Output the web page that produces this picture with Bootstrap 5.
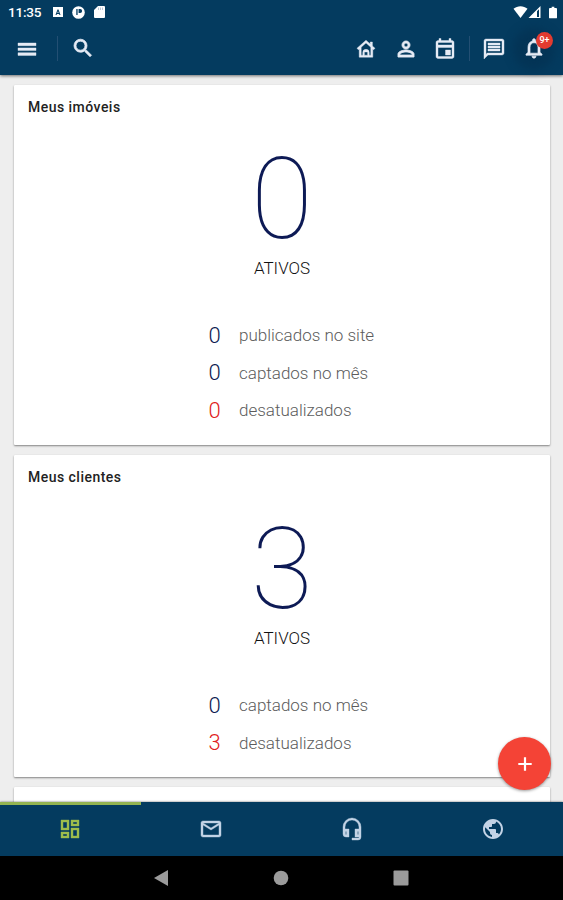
<!DOCTYPE html>
<html lang="pt-BR">
<head>
<meta charset="utf-8">
<meta name="viewport" content="width=device-width, initial-scale=1">
<title>Painel</title>
<link href="https://cdn.jsdelivr.net/npm/bootstrap@5.3.0/dist/css/bootstrap.min.css" rel="stylesheet">
<style>
body{font-family:Roboto,"Liberation Sans",sans-serif;background:#eee;color:#000}
svg{display:block;fill:currentColor;flex:none}
.app{height:900px;width:563px}
.top{background:#043b5f;height:75px;color:#e6ebf5;box-shadow:0 1px 3px rgba(0,0,0,.55);z-index:2}
.status{height:24px;padding:0 6px 0 8px;font-size:13.6px;font-weight:500;color:#fff;gap:9px}
.status .clock{width:36px;letter-spacing:-.25px;line-height:24px}
.tools{height:49px;padding:0 17px 0 15px}
.divider{width:1px;height:25px;background:#234f73}
.ic{width:24px;height:24px;stroke:currentColor;stroke-width:.4}
.gap-menu{margin:0 13px 0 18px}
.gap-chat{margin:0 12px}
.ic-person{margin-left:16px}
.ic-date{margin-left:15px}
.bell{margin-left:16px;box-shadow:0 0 9px 9px rgba(3,46,78,.5);background:rgba(3,46,78,.5);border-radius:50%}
.count{width:17px;height:17px;font-size:9px;line-height:17px;background:#e23b30;left:14px;top:-5px;color:#fff;font-weight:500}
.main{padding:10px 13px 0 14px;gap:10px;min-height:0}
.panel{background:#fff;border:0;border-radius:1px;box-shadow:0 1px 2px rgba(0,0,0,.45);flex:none;padding-top:14px}
.tall{height:360px}.mid{height:322px}
.panel h2{font-size:14px;line-height:16px;font-weight:500;letter-spacing:.47px;margin:0 14px 29px;color:#222}
.big{font-size:113px;line-height:112px;font-weight:100;color:#0d1a55}
.lbl{font-size:17px;line-height:18px;font-weight:300;color:#111;margin-top:3px}
.stats{margin:40px 0 0 191px}
.stats>div{height:37.5px;gap:15px}
.num{width:19px;text-align:center;font-size:22px;font-weight:300;color:#0b1a50;line-height:1}
.num.red{color:#e02020}
.desc{font-size:17px;font-weight:300;color:#5c5c5c;line-height:1}
.fab{width:53px;height:53px;background:#f44336;color:#fff;right:12px;bottom:110px;z-index:4;border:0;box-shadow:0 1px 3px rgba(0,0,0,.4)}
.tabs{height:54px;background:#043b5f;color:#c3d3e6;z-index:2;box-shadow:0 0 2px rgba(0,0,0,.6)}
.tabs a{color:inherit;padding-bottom:1px}
.tabs a.on{color:#9fbe4c;border-top:3px solid #93b351;padding-bottom:4px}
.sys{height:44px;background:#000;color:#9b9b9b;gap:98px;padding-right:1px}
</style>
<script src="https://cdn.jsdelivr.net/npm/bootstrap@5.3.0/dist/js/bootstrap.bundle.min.js"></script>
</head>
<body>
<div class="app d-flex flex-column position-relative overflow-hidden">
<header class="top flex-shrink-0">
 <div class="status d-flex align-items-center">
  <span class="clock">11:35</span>
  <svg width="10" height="10" viewBox="0 0 10 10"><path fill-rule="evenodd" d="M0 0h10v10H0zM2.500 8h1l.4-1h2.200l.4 1h1L5.500 2.500h-1zM5 4l.6 1.900H4.400z"/></svg>
  <svg width="13" height="13" viewBox="0 0 13 13"><circle cx="6.500" cy="6.500" r="6.300"/><path fill="#043b5f" d="M4.300 3h1.300v6H4.300zM6.600 3h1.500a2 2 0 0 1 0 4H6.600z"/></svg>
  <svg width="11" height="12" viewBox="0 0 11 12"><path d="M4 0h6a1 1 0 0 1 1 1v10a1 1 0 0 1-1 1H1a1 1 0 0 1-1-1V4z"/><path fill="#bcc8d8" d="M4 1.500h1V4H4zM6 1.500h1V4H6zM8 1.500h1V4H8z"/></svg>
  <div class="d-flex align-items-center ms-auto">
   <svg width="15" height="12" viewBox="0 0 14 12"><path d="M7 12 0 2.700C4-.7 10-.7 14 2.700z"/></svg>
   <svg class="signal" width="13" height="12" viewBox="0 0 12 12"><path fill-rule="evenodd" d="M12 0v12H0zM8.500 5.200V11h2V3.300z"/></svg>
   <svg class="ms-2" width="8" height="13" viewBox="0 0 9 13"><path d="M3 0h3v1.500h2a1 1 0 0 1 1 1V12a1 1 0 0 1-1 1H1a1 1 0 0 1-1-1V2.500a1 1 0 0 1 1-1h2z"/></svg>
  </div>
 </div>
 <nav class="tools d-flex align-items-center">
  <svg class="ic" viewBox="0 0 24 24"><path d="M3 6h18v2.700H3zM3 10.900h18v2.700H3zM3 15.700h18v2.700H3z"/></svg>
  <span class="divider gap-menu"></span>
  <svg class="ic" viewBox="0 0 24 24"><path stroke-width=".8" transform="translate(0 -.8)" d="M15.500 14h-.79l-.28-.27A6.470 6.470 0 0 0 16 9.500 6.500 6.500 0 1 0 9.500 16c1.610 0 3.090-.59 4.230-1.570l.27.28v.79l5 4.990L20.490 19l-4.990-5zm-6 0C7.010 14 5 11.990 5 9.500S7.010 5 9.500 5 14 7.010 14 9.500 11.990 14 9.500 14z"/></svg>
  <div class="d-flex align-items-center ms-auto">
   <svg class="ic" viewBox="0 0 24 24"><path fill-rule="evenodd" d="M12 3.200 3 11.300l1.300 1.400.9-.8v8.300h13.600v-8.300l.9.800 1.300-1.400-2.600-2.300V5h-2.200v2zM12 5.900l4.800 4.300v8h-1.600v-2.700a3.200 3.200 0 0 0-6.400 0v2.700H7.200v-8zM10.400 15h3.200v3.200h-3.200z"/></svg>
   <svg class="ic ic-person" viewBox="0 0 24 24"><path stroke-width=".9" d="M12 5.900a2.100 2.100 0 1 1 0 4.200 2.100 2.100 0 0 1 0-4.200m0 9c2.970 0 6.100 1.460 6.100 2.100v1.100H5.900V17c0-.64 3.130-2.100 6.100-2.100M12 4C9.790 4 8 5.790 8 8s1.790 4 4 4 4-1.790 4-4-1.790-4-4-4zm0 9c-2.670 0-8 1.340-8 4v3h16v-3c0-2.660-5.330-4-8-4z"/></svg>
   <svg class="ic ic-date" viewBox="0 0 24 24"><path d="M19 3.500h-1v-2h-2v2H8v-2H6v2H5c-1.100 0-2 .9-2 2v14c0 1.100.9 2 2 2h14c1.100 0 2-.9 2-2v-14c0-1.100-.9-2-2-2zm0 16H5v-9h14zm0-11.500H5V5.500h14zM12.500 13h5v5h-5z"/></svg>
   <span class="divider gap-chat"></span>
   <svg class="ic" viewBox="0 0 24 24"><path fill-rule="evenodd" d="M4 2h16c1.100 0 2 .9 2 2v12c0 1.100-.9 2-2 2H6l-4 4V4c0-1.100.9-2 2-2zm0 2v13.200L5.200 16H20V4zM6 6h12v2H6zM6 9h12v2H6zM6 12h12v2H6z"/></svg>
   <div class="position-relative bell">
    <svg class="ic" viewBox="0 0 24 24"><path stroke-width=".7" transform="translate(0 -.8)" d="M12 22c1.100 0 2-.9 2-2h-4c0 1.100.9 2 2 2zm6-6v-5c0-3.070-1.630-5.640-4.500-6.320V4c0-.83-.67-1.500-1.500-1.500s-1.500.67-1.500 1.500v.68C7.640 5.360 6 7.920 6 11v5l-2 2v1h16v-1zm-2 1H8v-6c0-2.480 1.510-4.500 4-4.500s4 2.020 4 4.500z"/></svg>
    <span class="count position-absolute rounded-circle text-center">9+</span>
   </div>
  </div>
 </nav>
</header>
<main class="main d-flex flex-column flex-fill overflow-hidden">
 <section class="card panel tall">
  <h2>Meus imóveis</h2>
  <div class="big text-center">0</div>
  <div class="lbl text-center">ATIVOS</div>
  <div class="stats">
   <div class="d-flex align-items-center"><span class="num">0</span><span class="desc">publicados no site</span></div>
   <div class="d-flex align-items-center"><span class="num">0</span><span class="desc">captados no mês</span></div>
   <div class="d-flex align-items-center"><span class="num red">0</span><span class="desc">desatualizados</span></div>
  </div>
 </section>
 <section class="card panel mid">
  <h2>Meus clientes</h2>
  <div class="big text-center">3</div>
  <div class="lbl text-center">ATIVOS</div>
  <div class="stats">
   <div class="d-flex align-items-center"><span class="num">0</span><span class="desc">captados no mês</span></div>
   <div class="d-flex align-items-center"><span class="num red">3</span><span class="desc">desatualizados</span></div>
  </div>
 </section>
 <section class="card panel mid"></section>
</main>
<button class="fab position-absolute rounded-circle d-flex align-items-center justify-content-center p-0" aria-label="Adicionar"><svg width="24" height="24" viewBox="0 0 24 24"><path d="M18.700 13.100h-5.600v5.600h-2.200v-5.600H5.300v-2.200h5.600V5.300h2.200v5.600h5.600z"/></svg></button>
<nav class="tabs d-flex flex-shrink-0">
 <a class="on col-3 d-flex align-items-center justify-content-center" href="#"><svg class="ic" viewBox="0 0 24 24"><path d="M19 5v2h-4V5zM9 5v6H5V5zm10 8v6h-4v-6zM9 17v2H5v-2zM21 3h-8v6h8zM11 3H3v10h8zm10 8h-8v10h8zm-10 4H3v6h8z"/></svg></a>
 <a class="col-3 d-flex align-items-center justify-content-center" href="#"><svg class="ic" viewBox="0 0 24 24"><path d="M20 4H4c-1.100 0-2 .9-2 2v12c0 1.100.9 2 2 2h16c1.100 0 2-.9 2-2V6c0-1.100-.9-2-2-2zm0 14H4V8l8 5 8-5zm-8-7L4 6h16z"/></svg></a>
 <a class="col-3 d-flex align-items-center justify-content-center" href="#"><svg class="ic" viewBox="0 0 24 24"><path fill-rule="evenodd" d="M12 1a9 9 0 0 0-9 9v7a3 3 0 0 0 3 3h3v-8H5v-2a7 7 0 0 1 14 0v2h-4v8h4v1h-7v2h6a3 3 0 0 0 3-3V10a9 9 0 0 0-9-9zM6.500 14.500v3H6a.5.500 0 0 1-.5-.5v-2.500zm12 0v3h-1v-3z"/></svg></a>
 <a class="col-3 d-flex align-items-center justify-content-center" href="#"><svg class="ic" viewBox="0 0 24 24"><path stroke="none" d="M12 2C6.480 2 2 6.480 2 12s4.480 10 10 10 10-4.480 10-10S17.520 2 12 2zm-1 17.930c-3.950-.49-7-3.850-7-7.930 0-.62.080-1.210.210-1.790L9 15v1c0 1.100.9 2 2 2v1.930zm6.900-2.540c-.26-.81-1-1.390-1.900-1.390h-1v-3c0-.55-.45-1-1-1H8v-2h2c.55 0 1-.45 1-1V7h2c1.100 0 2-.9 2-2v-.41c2.930 1.190 5 4.060 5 7.410 0 2.080-.8 3.970-2.100 5.390z"/></svg></a>
</nav>
<footer class="sys d-flex align-items-center justify-content-center flex-shrink-0">
 <svg width="22" height="18" viewBox="0 0 22 18"><path d="M18 1v16L4 9z"/></svg>
 <svg width="22" height="18" viewBox="0 0 22 18"><circle cx="11" cy="9" r="7.300"/></svg>
 <svg width="22" height="18" viewBox="0 0 22 18"><rect x="3.500" y="1.500" width="15" height="15" rx="1"/></svg>
</footer>
</div>
</body>
</html>
